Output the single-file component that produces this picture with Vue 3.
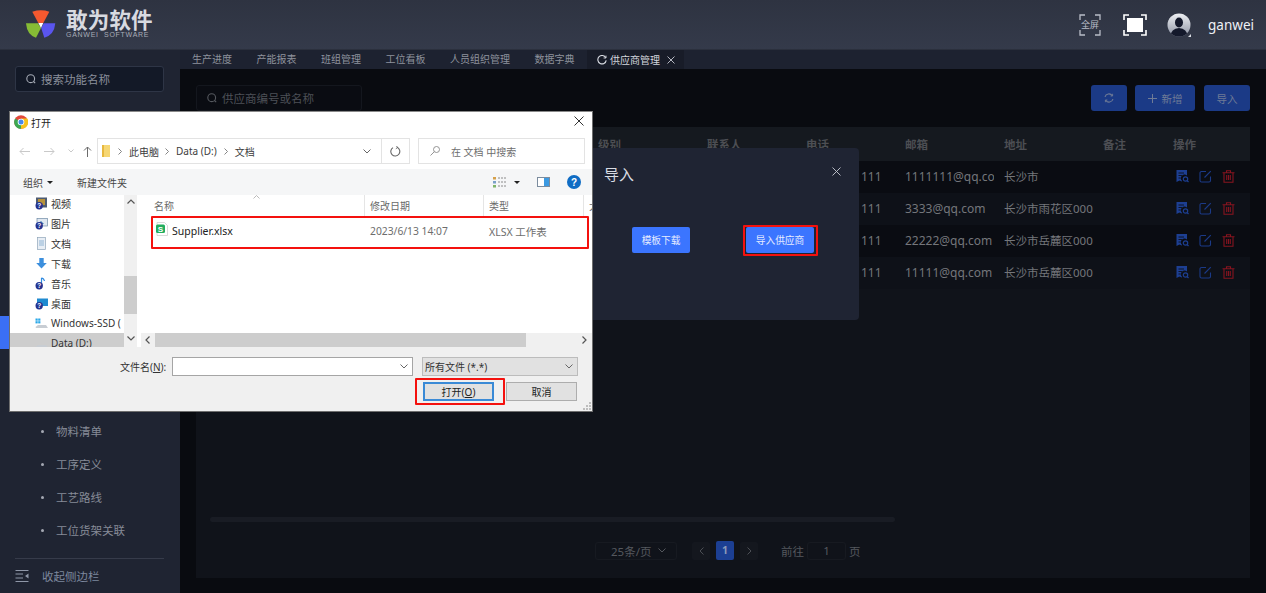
<script setup>
const tabs = ['生产进度', '产能报表', '班组管理', '工位看板', '人员组织管理', '数据字典']
const menu = ['产品管理', '设备管理', '车间管理', '产线管理', '工位管理', '客户管理', '供应商管理', '物料分类', '物料管理', '物料清单', '工序定义', '工艺路线', '工位货架关联', '仓库管理']
const columns = ['供应商编号', '名称', '级别', '联系人', '电话', '邮箱', '地址', '备注', '操作']
const rows = [
  { code: 'S001', name: '供应商一', level: '一级', person: '张三', phone: '13111111111', mail: '1111111@qq.com', addr: '长沙市' },
  { code: 'S002', name: '供应商二', level: '一级', person: '李四', phone: '13111111111', mail: '3333@qq.com', addr: '长沙市雨花区000' },
  { code: 'S003', name: '供应商三', level: '二级', person: '王五', phone: '13111111111', mail: '22222@qq.com', addr: '长沙市岳麓区000' },
  { code: 'S004', name: '供应商四', level: '二级', person: '赵六', phone: '13111111111', mail: '11111@qq.com', addr: '长沙市岳麓区000' }
]
const tree = [
  { label: '视频', kind: 'video', badge: true },
  { label: '图片', kind: 'pic', badge: true },
  { label: '文档', kind: 'doc' },
  { label: '下载', kind: 'down' },
  { label: '音乐', kind: 'music', badge: true },
  { label: '桌面', kind: 'desk', badge: true },
  { label: 'Windows-SSD (', kind: 'drive', win: true },
  { label: 'Data (D:)', kind: 'drive', selected: true }
]
</script>

<template>
  <div class="app">
    <header class="top">
      <div class="brand">
        <svg class="logo" width="30" height="29" viewBox="0 0 30 29">
          <path d="M6.300 1.700 Q15 -1 23.300 1.700 L17.300 13 H12.300 Z" fill="#f4592f" />
          <path d="M0 13.300 H11.800 L15 18 L10 27.700 Q1 25 0 13.300 Z" fill="#86bc35" />
          <path d="M29.300 13.300 H17.800 L15.200 18 L18.300 27.700 Q28.300 25 29.300 13.300 Z" fill="#5a55ee" />
          <path d="M12.300 13 H17.300 L15 18 Z" fill="#fff" />
        </svg>
        <div class="brand-text">
          <div class="brand-cn">敢为软件</div>
          <div class="brand-en">GANWEI&nbsp; SOFTWARE</div>
        </div>
      </div>
      <div class="top-right">
        <div class="full-text">
          <svg width="22" height="22" viewBox="0 0 22 22" fill="none" stroke="#b9bdc8" stroke-width="1.300">
            <path d="M1 6V1H6M16 1H21V6M21 16V21H16M6 21H1V16" />
          </svg>
          <span>全屏</span>
        </div>
        <svg class="full-icon" width="24" height="22" viewBox="0 0 24 22" fill="none" stroke="#fff" stroke-width="1.600">
          <path d="M1 6V1H6M18 1H23V6M23 16V21H18M6 21H1V16" />
          <rect x="4" y="4" width="16" height="14" fill="#fff" stroke="none" />
        </svg>
        <svg class="avatar" width="24" height="24" viewBox="0 0 24 24">
          <defs>
            <linearGradient id="ava" x1="0" y1="0" x2="0" y2="1">
              <stop offset="0" stop-color="#eef0f3" />
              <stop offset="1" stop-color="#8d93a3" />
            </linearGradient>
            <clipPath id="avc"><circle cx="12" cy="12" r="11.500" /></clipPath>
          </defs>
          <circle cx="12" cy="12" r="11.500" fill="url(#ava)" />
          <g clip-path="url(#avc)" fill="#14192b">
            <ellipse cx="12" cy="9.500" rx="4" ry="5" />
            <path d="M3 24 Q4 15.500 12 15 Q20 15.500 21 24 Z" />
          </g>
          <path d="M24 21 V24 H21 Z" fill="#d9dce3" />
        </svg>
        <span class="user">ganwei</span>
      </div>
    </header>

    <div class="shell">
      <aside class="side">
        <div class="side-search">
          <svg width="10" height="10" viewBox="0 0 10 10" fill="none" stroke="#a6abb6" stroke-width="1.100">
            <circle cx="4.700" cy="4.700" r="3.900" /><path d="M7.500 7.500 9.200 9.200" />
          </svg>
          <span>搜索功能名称</span>
        </div>
        <ul class="menu">
          <li v-for="(m, i) in menu" :key="m" class="menu-item" :class="{ active: i === 6 }">
            <i class="dot"></i>{{ m }}
          </li>
        </ul>
        <div class="side-foot">
          <svg width="14" height="12" viewBox="0 0 14 12" fill="none" stroke="#8f97a8" stroke-width="1">
            <path d="M0.500 0.500H13.500M0.500 4H8M0.500 8H8M0.500 11.500H13.500" />
            <path d="M13.500 3.500V8.500L10 6Z" fill="#8f97a8" stroke="none" />
          </svg>
          <span>收起侧边栏</span>
        </div>
      </aside>

      <div class="work">
        <nav class="tabs">
          <span v-for="t in tabs" :key="t" class="tab">{{ t }}</span>
          <span class="tab-on">
            <svg width="10" height="10" viewBox="0 0 10 10" fill="none" stroke="#d8dbe2" stroke-width="1.100">
              <path d="M8.800 2.800A4.200 4.200 0 1 0 9.200 5.300" /><path d="M9 0.600V3H6.600" stroke-width="0.900" />
            </svg>
            <span>供应商管理</span>
            <svg width="8" height="8" viewBox="0 0 8 8" stroke="#c6cad3" stroke-width="0.900"><path d="M0.500 0.500 7.500 7.500M7.500 0.500 0.500 7.500" /></svg>
          </span>
        </nav>

        <main class="page">
          <div class="bar">
            <div class="page-search">
              <svg width="10" height="10" viewBox="0 0 10 10" fill="none" stroke="#56595f" stroke-width="1.100">
                <circle cx="4.700" cy="4.700" r="3.900" /><path d="M7.500 7.500 9.200 9.200" />
              </svg>
              <span>供应商编号或名称</span>
            </div>
            <div class="actions">
              <button class="dim-btn b1">
                <svg width="10" height="10" viewBox="0 0 10 10" fill="none" stroke="#6f7b96" stroke-width="1.100">
                  <path d="M1 4A4 4 0 0 1 8.300 2.800M9 6A4 4 0 0 1 1.700 7.200" /><path d="M8.600 0.800V3H6.600M1.400 9.200V7H3.400" stroke-width="0.900" />
                </svg>
              </button>
              <button class="dim-btn b2">
                <svg width="9" height="9" viewBox="0 0 9 9" stroke="#6f7b96" stroke-width="1"><path d="M4.500 0V9M0 4.500H9" /></svg>
                新增
              </button>
              <button class="dim-btn b3">导入</button>
            </div>
          </div>

          <section class="card">
            <div class="trow thead">
              <div v-for="c in columns" :key="c" class="cell">{{ c }}</div>
            </div>
            <div v-for="(r, i) in rows" :key="r.code" class="trow tbody" :class="{ even: i % 2 === 1 }">
              <div class="cell">{{ r.code }}</div>
              <div class="cell">{{ r.name }}</div>
              <div class="cell">{{ r.level }}</div>
              <div class="cell">{{ r.person }}</div>
              <div class="cell">{{ r.phone }}</div>
              <div class="cell">{{ r.mail }}</div>
              <div class="cell addr-cell">{{ r.addr }}</div>
              <div class="cell"></div>
              <div class="cell ops">
                <svg width="13" height="13" viewBox="0 0 13 13">
                  <path d="M0.500 0H11V5.500A3.500 3.500 0 0 0 6.200 11L5.500 11.500 3.500 10.500 0.500 12Z" fill="#1d3f92" />
                  <path d="M2.500 3H8M2.500 5.500H6M2.500 8H4.500" stroke="#0c1018" stroke-width="0.900" />
                  <circle cx="9.500" cy="9" r="2.200" fill="none" stroke="#1d3f92" stroke-width="1.200" />
                  <path d="M11 10.500 12.500 12" stroke="#1d3f92" stroke-width="1.200" />
                </svg>
                <svg width="13" height="13" viewBox="0 0 13 13" fill="none" stroke="#1b3a87" stroke-width="1.100">
                  <path d="M11.500 6.500V10.500A1.500 1.500 0 0 1 10 12H2.500A1.500 1.500 0 0 1 1 10.500V3A1.500 1.500 0 0 1 2.500 1.500H7" />
                  <path d="M5.500 7.500 11.800 1.200" />
                </svg>
                <svg width="13" height="13" viewBox="0 0 13 13" fill="none" stroke="#86141f" stroke-width="1.100">
                  <path d="M0.500 2.700H12.500M4.500 2.500V0.800H8.500V2.500" />
                  <path d="M2 2.700V12.300H11V2.700" />
                  <path d="M4.700 5V10M6.500 5V10M8.300 5V10" />
                </svg>
              </div>
            </div>
            <div class="card-foot">
              <div class="hbar"></div>
              <div class="pager">
                <div class="pg-select">
                  <span>25条/页</span>
                  <svg width="8" height="5" viewBox="0 0 8 5" fill="none" stroke="#54575d" stroke-width="1"><path d="M0.500 0.500 4 4 7.500 0.500" /></svg>
                </div>
                <span class="pg-btn pg-prev">
                  <svg width="5" height="8" viewBox="0 0 5 8" fill="none" stroke="#4c4f55" stroke-width="1"><path d="M4.500 0.500 1 4 4.500 7.500" /></svg>
                </span>
                <span class="pg-num">1</span>
                <span class="pg-btn">
                  <svg width="5" height="8" viewBox="0 0 5 8" fill="none" stroke="#4c4f55" stroke-width="1"><path d="M0.500 0.500 4 4 0.500 7.500" /></svg>
                </span>
                <span class="pg-goto">前往</span>
                <span class="pg-input">1</span>
                <span class="pg-page">页</span>
              </div>
            </div>
          </section>
        </main>
      </div>
    </div>

    <!-- application modal -->
    <div class="modal">
      <div class="modal-head">
        <span>导入</span>
        <svg width="9" height="9" viewBox="0 0 9 9" stroke="#c8ccd5" stroke-width="0.900"><path d="M0.500 0.500 8.500 8.500M8.500 0.500 0.500 8.500" /></svg>
      </div>
      <div class="modal-body">
        <button class="blue w58">模板下载</button>
        <button class="blue w68">导入供应商<i class="mark mark-a"></i></button>
      </div>
    </div>

    <!-- native file dialog window -->
    <div class="fd">
      <div class="fd-title">
        <svg width="14" height="14" viewBox="0 0 14 14">
          <circle cx="7" cy="7" r="6.800" fill="#e2483b" />
          <path d="M7 7 1.100 3.600A6.800 6.800 0 0 0 7 13.800Z" fill="#3ba853" />
          <path d="M7 3.500H13.300A6.800 6.800 0 0 1 7 13.800L7 7Z" fill="#f6c21b" />
          <circle cx="7" cy="7" r="3.300" fill="#fff" />
          <circle cx="7" cy="7" r="2.500" fill="#4788ec" />
        </svg>
        <span>打开</span>
        <svg class="fd-close" width="10" height="10" viewBox="0 0 10 10" stroke="#333" stroke-width="1"><path d="M0.500 0.500 9.500 9.500M9.500 0.500 0.500 9.500" /></svg>
      </div>

      <div class="fd-nav">
        <svg width="11" height="9" viewBox="0 0 11 9" fill="none" stroke="#c9c9c9" stroke-width="1"><path d="M11 4.500H1M4.500 1 1 4.500 4.500 8" /></svg>
        <svg class="nav-fwd" width="11" height="9" viewBox="0 0 11 9" fill="none" stroke="#c9c9c9" stroke-width="1"><path d="M0 4.500H10M6.500 1 10 4.500 6.500 8" /></svg>
        <svg class="nav-down" width="6" height="4" viewBox="0 0 6 4" fill="none" stroke="#c9c9c9" stroke-width="1"><path d="M0.500 0.500 3 3 5.500 0.500" /></svg>
        <svg class="nav-up" width="9" height="11" viewBox="0 0 9 11" fill="none" stroke="#6b6b6b" stroke-width="1"><path d="M4.500 11V1M1 4.500 4.500 1 8 4.500" /></svg>
        <div class="addr">
          <svg width="8" height="12" viewBox="0 0 8 12"><rect width="8" height="12" fill="#f6d774" /><rect width="2" height="12" fill="#e7b83f" /></svg>
          <svg class="ch c1" width="4" height="7" viewBox="0 0 4 7" fill="none" stroke="#777" stroke-width="0.900"><path d="M0.500 0.500 3.500 3.500 0.500 6.500" /></svg>
          <span class="a1">此电脑</span>
          <svg class="ch c2" width="4" height="7" viewBox="0 0 4 7" fill="none" stroke="#777" stroke-width="0.900"><path d="M0.500 0.500 3.500 3.500 0.500 6.500" /></svg>
          <span class="a2">Data (D:)</span>
          <svg class="ch c3" width="4" height="7" viewBox="0 0 4 7" fill="none" stroke="#777" stroke-width="0.900"><path d="M0.500 0.500 3.500 3.500 0.500 6.500" /></svg>
          <span class="a3">文档</span>
          <svg class="addr-drop" width="8" height="5" viewBox="0 0 8 5" fill="none" stroke="#666" stroke-width="1"><path d="M0.500 0.500 4 4 7.500 0.500" /></svg>
        </div>
        <div class="refresh">
          <svg width="11" height="11" viewBox="0 0 11 11" fill="none" stroke="#666" stroke-width="1.100">
            <path d="M7 1.300A4.500 4.500 0 1 1 3 1.600" /><path d="M6.500 0 7.500 1.500 5.800 2.800" stroke-width="0.900" />
          </svg>
        </div>
        <div class="fd-search">
          <svg width="10" height="10" viewBox="0 0 10 10" fill="none" stroke="#888" stroke-width="0.900">
            <circle cx="6.500" cy="3.500" r="3" /><path d="M4.300 5.700 0.500 9.500" />
          </svg>
          <span>在 文档 中搜索</span>
        </div>
      </div>

      <div class="fd-tools">
        <span class="org">组织</span>
        <i class="caret"></i>
        <span class="newf">新建文件夹</span>
        <svg class="tv" width="14" height="12" viewBox="0 0 14 12">
          <rect x="0" y="1" width="3" height="2.500" fill="#d5a04a" /><rect x="0" y="5" width="3" height="2.500" fill="#7aa0c9" /><rect x="0" y="9" width="3" height="2.500" fill="#7fb46a" />
          <path d="M5 2H14M5 6H14M5 10H14" stroke="#8a8a8a" stroke-width="1" stroke-dasharray="2 1" />
        </svg>
        <i class="caret c-view"></i>
        <svg class="tp" width="13" height="10" viewBox="0 0 13 10">
          <rect x="0.500" y="0.500" width="12" height="9" fill="#fff" stroke="#7b8c9e" />
          <rect x="7" y="1" width="5" height="8" fill="#3c9ae2" />
        </svg>
        <svg class="th" width="14" height="14" viewBox="0 0 14 14">
          <circle cx="7" cy="7" r="7" fill="#0f6cc4" />
          <text x="7" y="10.500" text-anchor="middle" font-size="10" font-weight="700" fill="#fff" font-family="Liberation Sans, sans-serif">?</text>
        </svg>
      </div>

      <div class="fd-body">
        <div class="tree">
          <div v-for="t in tree" :key="t.label" class="tree-row" :class="{ sel: t.selected }">
            <svg width="13" height="13" viewBox="0 0 13 13">
              <template v-if="t.kind === 'video'">
                <rect x="1" y="0.500" width="11" height="10" fill="#4d5b72" /><rect x="3" y="2" width="7" height="6" fill="#b7923b" />
              </template>
              <template v-else-if="t.kind === 'pic'">
                <rect x="2" y="1.500" width="10.500" height="7.500" fill="#dfe7f0" stroke="#6f8aa5" stroke-width="0.700" /><path d="M3 7 6 4 9 7Z" fill="#3e7cb8" />
              </template>
              <template v-else-if="t.kind === 'doc'">
                <rect x="2.500" y="0.500" width="8" height="12" fill="#e8eef5" stroke="#8fa5b8" stroke-width="0.700" />
                <path d="M4 4H9M4 6H9M4 8H9" stroke="#79a4cc" stroke-width="0.800" />
              </template>
              <template v-else-if="t.kind === 'down'">
                <path d="M4.300 1H8.700V6H11.800L6.500 11.500 1.200 6H4.300Z" fill="#3c8fdd" />
              </template>
              <template v-else-if="t.kind === 'music'">
                <path d="M6.500 1V8" stroke="#2f8ae0" stroke-width="1.200" /><path d="M6.500 0.800Q9 1.500 9.500 4" stroke="#2f8ae0" stroke-width="1.200" fill="none" />
              </template>
              <template v-else-if="t.kind === 'desk'">
                <rect x="2" y="1.500" width="11" height="7.500" fill="#1f8ad0" />
              </template>
              <template v-else>
                <path d="M0.500 10 3 8H11L13 11H1Z" fill="#c8cdd3" />
                <template v-if="t.win">
                  <rect x="0.500" y="1.500" width="2.200" height="2.200" fill="#28a7e8" /><rect x="3.200" y="1.500" width="2.200" height="2.200" fill="#28a7e8" /><rect x="0.500" y="4.200" width="2.200" height="2.200" fill="#28a7e8" /><rect x="3.200" y="4.200" width="2.200" height="2.200" fill="#28a7e8" />
                </template>
              </template>
              <template v-if="t.badge">
                <circle cx="4.200" cy="8.800" r="3.700" fill="#25338f" />
                <text x="4.200" y="11.300" text-anchor="middle" font-size="6.500" font-weight="700" fill="#fff" font-family="Liberation Sans, sans-serif">?</text>
              </template>
            </svg>
            <span>{{ t.label }}</span>
          </div>
        </div>

        <div class="vscroll">
          <svg width="8" height="5" viewBox="0 0 8 5" fill="none" stroke="#555" stroke-width="1.200"><path d="M0.500 4.500 4 1 7.500 4.500" /></svg>
          <i class="vthumb"></i>
          <svg class="vdown" width="8" height="5" viewBox="0 0 8 5" fill="none" stroke="#555" stroke-width="1.200"><path d="M0.500 0.500 4 4 7.500 0.500" /></svg>
        </div>

        <div class="list">
          <div class="list-head">
            <span class="col-name">名称</span>
            <svg class="sort" width="7" height="4" viewBox="0 0 7 4" fill="none" stroke="#aaa" stroke-width="0.800"><path d="M0.500 3.500 3.500 0.500 6.500 3.500" /></svg>
            <span class="col-date">修改日期</span>
            <span class="col-type">类型</span>
            <span class="col-size">大小</span>
          </div>
          <div class="file">
            <svg class="col-icon" width="12" height="14" viewBox="0 0 12 14">
              <path d="M1 0.500H8.500L11.500 3.500V13.500H1Z" fill="#fff" stroke="#c8c8c8" stroke-width="0.700" />
              <rect x="0" y="2.500" width="9" height="8.500" rx="1.500" fill="#21ad5f" />
              <text x="4.500" y="9.500" text-anchor="middle" font-size="8" font-weight="700" fill="#fff" font-family="Liberation Sans, sans-serif">S</text>
            </svg>
            <span class="fname">Supplier.xlsx</span>
            <span class="fdate">2023/6/13 14:07</span>
            <span class="ftype">XLSX 工作表</span>
          </div>
          <div class="hscroll">
            <svg class="hl" width="5" height="8" viewBox="0 0 5 8" fill="none" stroke="#555" stroke-width="1.200"><path d="M4.500 0.500 1 4 4.500 7.500" /></svg>
            <i class="hthumb"></i>
            <svg class="hr" width="5" height="8" viewBox="0 0 5 8" fill="none" stroke="#555" stroke-width="1.200"><path d="M0.500 0.500 4 4 0.500 7.500" /></svg>
          </div>
          <i class="mark mark-b"></i>
        </div>
      </div>

      <div class="fd-foot">
        <div class="foot-line">
          <span class="fn-label">文件名(<u>N</u>):</span>
          <div class="fn-input">
            <svg width="8" height="5" viewBox="0 0 8 5" fill="none" stroke="#666" stroke-width="1"><path d="M0.500 0.500 4 4 7.500 0.500" /></svg>
          </div>
          <div class="fn-type">
            <span>所有文件 (*.*)</span>
            <svg width="8" height="5" viewBox="0 0 8 5" fill="none" stroke="#666" stroke-width="1"><path d="M0.500 0.500 4 4 7.500 0.500" /></svg>
          </div>
        </div>
        <div class="foot-btns">
          <button class="win-btn primary">打开(<u>O</u>)<i class="mark mark-c"></i></button>
          <button class="win-btn">取消</button>
        </div>
        <svg class="grip" width="8" height="8" viewBox="0 0 8 8" fill="#bdbdbd">
          <rect x="6" y="0" width="2" height="2" /><rect x="3" y="3" width="2" height="2" /><rect x="6" y="3" width="2" height="2" /><rect x="0" y="6" width="2" height="2" /><rect x="3" y="6" width="2" height="2" /><rect x="6" y="6" width="2" height="2" />
        </svg>
      </div>
    </div>
  </div>
</template>

<style>
html, body { margin: 0; overflow: hidden; background: #090b10; }
</style>

<style scoped>
* { box-sizing: border-box; }
.app {
  position: relative;
  width: 1266px;
  height: 593px;
  overflow: hidden;
  font-family: "Noto Sans", "Noto Sans CJK SC", sans-serif;
  display: flex;
  flex-direction: column;
  background: #090b10;
}
button { font-family: inherit; border: 0; padding: 0; }
i { display: block; }

/* header */
.top {
  height: 50px;
  flex: none;
  display: flex;
  justify-content: space-between;
  align-items: center;
  background: linear-gradient(#2e3341, #343a4a);
  border-bottom: 1px solid #2b303d;
}
.brand { display: flex; align-items: center; margin-left: 26px; }
.logo { margin-top: 0; }
.brand-text { margin-left: 10px; color: #d8dae0; margin-top: 1px; }
.brand-cn { font: 700 21.500px/20px "Noto Sans CJK SC", sans-serif; letter-spacing: 0.200px; margin-top: -2px; }
.brand-en { font: 400 7px/9px "Liberation Sans", sans-serif; letter-spacing: 0.720px; color: #a8acb7; margin-top: 1px; }
.top-right { display: flex; align-items: center; margin-right: 12px; }
.full-text { position: relative; width: 22px; height: 22px; display: flex; align-items: center; justify-content: center; }
.full-text svg { position: absolute; inset: 0; }
.full-text span { font: 9px/1 "Noto Sans CJK SC", sans-serif; color: #b9bdc8; white-space: nowrap; }
.full-icon { margin-left: 22px; }
.avatar { margin-left: 20px; }
.user { margin-left: 17px; font-size: 13.500px; color: #eef0f5; }

.shell { flex: 1; min-height: 0; display: flex; }

/* sidebar */
.side {
  width: 180px;
  flex: none;
  display: flex;
  flex-direction: column;
  background: #1f2432;
}
.side-search {
  margin: 16px 16px 0 15px;
  height: 26px;
  flex: none;
  display: flex;
  align-items: center;
  gap: 5px;
  padding-left: 10px;
  background: #131927;
  border: 1px solid #2e3546;
  border-radius: 3px;
  color: #8a8f9b;
  font-size: 11.500px;
}
.menu {
  flex: 1;
  min-height: 0;
  overflow: hidden;
  list-style: none;
  margin: 25.500px 0 0;
  padding: 0;
  font-size: 11.500px;
  color: #868b97;
}
.menu-item {
  height: 33px;
  display: flex;
  align-items: center;
  padding-left: 41px;
}
.menu-item.active { background: #3b6ff5; color: #fff; }
.dot { width: 3px; height: 3px; border-radius: 50%; background: #a4a8b2; margin-right: 12px; }
.side-foot {
  height: 35px;
  flex: none;
  margin: 0 16px 0 15px;
  border-top: 1px solid #363b4a;
  display: flex;
  align-items: center;
  gap: 13px;
  font-size: 11.500px;
  color: #7d889e;
}

/* tabs */
.work { flex: 1; min-width: 0; display: flex; flex-direction: column; }
.tabs {
  height: 19px;
  flex: none;
  display: flex;
  align-items: center;
  background: #1d2230;
  font-size: 10px;
  color: #8e929d;
}
.tab { padding: 0 12.500px 0 12px; white-space: nowrap; line-height: 19px; }
.tab-on {
  width: 97px;
  height: 19px;
  display: flex;
  align-items: center;
  padding-left: 10px;
  background: #181c28;
  color: #d4d7de;
}
.tab-on span { margin-left: 3px; margin-right: 7px; }

/* page */
.page {
  flex: 1;
  min-height: 0;
  display: flex;
  flex-direction: column;
  padding: 16px 16px 15px;
  background: #090b10;
}
.bar { height: 26px; flex: none; display: flex; justify-content: space-between; margin-bottom: 16px; }
.page-search {
  width: 166px;
  display: flex;
  align-items: center;
  gap: 5px;
  padding-left: 10px;
  border: 1px solid #14171e;
  border-radius: 3px;
  background: #0a0c12;
  color: #4d5057;
  font-size: 11.500px;
}
.actions { display: flex; }
.dim-btn {
  height: 26px;
  display: flex;
  align-items: center;
  justify-content: center;
  gap: 5px;
  background: #1b3a86;
  border-radius: 3px;
  color: #6f7b96;
  font-size: 10.500px;
}
.b1 { width: 36px; }
.b2 { width: 60px; margin-left: 8px; }
.b3 { width: 46px; margin-left: 9px; }

.card { flex: 1; min-height: 0; display: flex; flex-direction: column; background: #10131a; }
.trow {
  display: grid;
  grid-template-columns: 196px 196px 109px 99px 99px 99px 99px 70px 87px;
  flex: none;
}
.cell { padding-left: 10px; overflow: hidden; white-space: nowrap; }
.thead { height: 34px; background: #15191f; color: #4c4e53; font-size: 11.500px; font-weight: 700; align-items: center; }
.tbody { height: 32px; padding-bottom: 2px; background: #0a0c12; color: #74767b; font-size: 12px; align-items: center; }
.tbody.even { background: #0e1118; }
.addr-cell { font-size: 11.500px; overflow: visible; }
.ops { display: flex; gap: 10px; padding-left: 13px; align-items: center; }

.card-foot { margin-top: auto; height: 61px; flex: none; }
.hbar { width: 685px; height: 5px; margin-left: 14px; border-radius: 3px; background: #191c24; }
.pager {
  margin: 19px 0 0 399px;
  height: 19px;
  display: flex;
  align-items: center;
  font-size: 11.500px;
  color: #55585e;
}
.pg-select {
  width: 82px;
  height: 18px;
  display: flex;
  align-items: center;
  justify-content: space-between;
  padding: 0 10px 0 15px;
  border: 1px solid #171a21;
  border-radius: 3px;
}
.pg-btn {
  width: 18px;
  height: 18px;
  display: flex;
  align-items: center;
  justify-content: center;
  background: #14171e;
  border-radius: 2px;
  margin-left: 6px;
}
.pg-prev { margin-left: 15px; }
.pg-num {
  width: 18px;
  height: 19px;
  margin-left: 6px;
  background: #1c3f93;
  border-radius: 2px;
  color: #8c9ab8;
  font-weight: 700;
  font-size: 10.500px;
  line-height: 19px;
  text-align: center;
}
.pg-goto { margin-left: 23px; }
.pg-input {
  width: 39px;
  height: 18px;
  margin-left: 3px;
  border: 1px solid #171a21;
  border-radius: 3px;
  text-align: center;
  line-height: 16px;
}
.pg-page { margin-left: 3px; }

/* app modal */
.modal {
  position: absolute;
  left: 300px;
  top: 148px;
  width: 559px;
  height: 172px;
  background: #1f2433;
  border-radius: 4px;
}
.modal-head {
  position: relative;
  height: 79px;
  padding: 16px 0 0 304px;
  color: #d9dce3;
  font-size: 15px;
  line-height: 20px;
}
.modal-head svg { position: absolute; left: 532px; top: 19px; }
.modal-body { display: flex; padding-left: 332px; gap: 56px; }
.blue {
  position: relative;
  height: 26px;
  background: #3b75ff;
  border-radius: 2px;
  color: #e6ecff;
  font-size: 9.700px;
}
.w58 { width: 58px; }
.w68 { width: 68px; }

.mark { position: absolute; border: 2px solid #f4110e; border-radius: 1px; pointer-events: none; }
.mark-a { left: -3px; top: -2px; width: 75px; height: 31px; }
.mark-b { left: 14px; top: 21px; width: 438px; height: 33px; }
.mark-c { left: -10px; top: -6px; width: 90px; height: 27px; }

/* file dialog window */
.fd {
  position: absolute;
  left: 9px;
  top: 111px;
  width: 584px;
  height: 301px;
  background: #fff;
  border: 1px solid #6e6e6e;
  border-top-color: #8a8a8a;
  display: flex;
  flex-direction: column;
  color: #3c3c3c;
  font-size: 10px;
}
.fd-title { height: 26px; flex: none; display: flex; align-items: center; padding-left: 4px; position: relative; margin-top: -3px; }
.fd-title span { margin-left: 3px; color: #222; }
.fd-close { position: absolute; left: 564px; top: 7px; }
.fd-nav { height: 26px; flex: none; display: flex; align-items: center; padding-left: 9px; margin-top: 3px; }
.nav-fwd { margin-left: 14px; }
.nav-down { margin-left: 13px; }
.nav-up { margin-left: 9px; }
.addr {
  margin-left: 5px;
  width: 285px;
  height: 26px;
  display: flex;
  align-items: center;
  padding-left: 4px;
  border: 1px solid #e3e3e3;
  background: #fff;
  position: relative;
}
.c1 { margin-left: 8px; }
.a1 { margin-left: 7px; }
.c2 { margin-left: 6px; }
.a2 { margin-left: 7px; }
.c3 { margin-left: 7px; }
.a3 { margin-left: 7px; }
.addr-drop { position: absolute; right: 10px; top: 10px; }
.refresh {
  width: 28px;
  height: 26px;
  display: flex;
  align-items: center;
  justify-content: center;
  border: 1px solid #e3e3e3;
  border-left: 0;
}
.fd-search {
  margin-left: 8px;
  width: 167px;
  height: 26px;
  display: flex;
  align-items: center;
  padding-left: 11px;
  gap: 11px;
  border: 1px solid #e3e3e3;
  color: #6d6d6d;
}
.fd-tools {
  height: 26px;
  flex: none;
  margin-top: 5px;
  display: flex;
  align-items: center;
  background: #f5f6f7;
  padding-left: 13px;
  color: #444;
}
.caret { width: 0; height: 0; border: 3px solid transparent; border-top: 3px solid #222; margin: 3px 0 0 4px; }
.newf { margin-left: 24px; }
.tv { margin-left: 366px; }
.c-view { margin-left: 7px; }
.tp { margin-left: 17px; }
.th { margin-left: 17px; }

.fd-body { height: 152px; flex: none; display: flex; }
.tree { width: 114px; flex: none; overflow: hidden; }
.tree-row {
  height: 20px;
  display: flex;
  align-items: center;
  gap: 3px;
  padding-left: 25px;
  white-space: nowrap;
  color: #333;
  overflow: hidden;
}
.tree-row:first-child { margin-top: -2px; }
.tree-row svg { flex: none; }
.tree-row.sel { background: #cdcdcd; }
.vscroll { width: 13px; flex: none; background: #f0f0f0; position: relative; display: flex; justify-content: center; padding-top: 4px; }
.vthumb { position: absolute; left: 0; right: 0; top: 81px; height: 38px; background: #cdcdcd; }
.vdown { position: absolute; left: 2.500px; bottom: 6px; }

.list { flex: 1; min-width: 0; position: relative; display: flex; flex-direction: column; overflow: hidden; }
.list-head {
  height: 21px;
  flex: none;
  position: relative;
  color: #6a6a6a;
  line-height: 22px;
}
.list-head span { position: absolute; top: 0; padding-left: 5px; height: 21px; border-left: 1px solid #e5e5e5; white-space: nowrap; }
.col-name { left: 12px; border-left: 0 !important; }
.col-date { left: 227px; }
.col-type { left: 346px; }
.col-size { left: 446px; }
.sort { position: absolute; left: 116px; top: 0; }
.file { flex: 1; position: relative; }
.file > * { position: absolute; top: 8px; white-space: nowrap; }
.file .col-icon { left: 19px; top: 6px; }
.fname { left: 35px; font-size: 10.500px; color: #222; }
.fdate { left: 233px; font-size: 10.300px; color: #6d6d6d; }
.ftype { left: 352px; font-size: 10.500px; color: #6d6d6d; }
.hscroll { height: 14px; flex: none; margin-left: 4px; background: #f0f0f0; position: relative; }
.hthumb { position: absolute; left: 14px; width: 371px; top: 0; bottom: 0; background: #cdcdcd; }
.hl { position: absolute; left: 4px; top: 3px; }
.hr { position: absolute; right: 5px; top: 3px; }

.fd-foot { flex: 1; background: #f0f0f0; position: relative; }
.foot-line { display: flex; align-items: center; height: 19px; margin-top: 10px; padding-left: 110px; }
.fn-label { color: #333; width: 52px; white-space: nowrap; }
.fn-input {
  width: 241px;
  height: 19px;
  background: #fff;
  border: 1px solid #a5a5a5;
  display: flex;
  align-items: center;
  justify-content: flex-end;
  padding-right: 4px;
}
.fn-type {
  margin-left: 9px;
  width: 156px;
  height: 19px;
  background: #e1e1e1;
  border: 1px solid #bcbcbc;
  display: flex;
  align-items: center;
  justify-content: space-between;
  padding: 0 4px 0 2px;
  color: #333;
}
.foot-btns { display: flex; padding-left: 413px; margin-top: 6px; gap: 12px; }
.win-btn {
  position: relative;
  width: 71px;
  height: 19px;
  background: #e1e1e1;
  border: 1px solid #adadad;
  color: #222;
  font-size: 10px;
}
.primary { border: 2px solid #3a8ad6; }
.grip { position: absolute; right: 1px; bottom: 1px; }
</style>
